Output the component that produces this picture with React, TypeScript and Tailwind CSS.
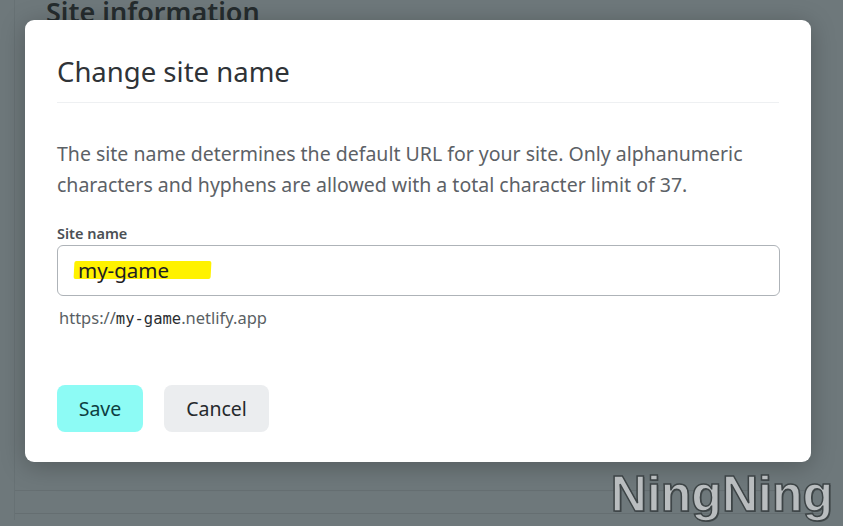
export default function App() {
  return (
    <div
      className="relative h-[526px] w-[843px] overflow-hidden bg-[#6e787b]"
      style={{ fontFamily: '"Noto Sans", "Open Sans", sans-serif' }}
    >
      {/* page behind the overlay, already dimmed */}
      <div className="ml-[14px] mr-[14px] h-full border-l border-[#677174]">
        <h2 className="ml-[31px] -mt-[6px] text-[27px] font-semibold leading-[36px] text-[#252c2e]">
          Site information
        </h2>
        <div className="mt-[460px] border-t border-[#666f72]" />
        <div className="mt-[22px] border-t border-[#656e71]" />
      </div>

      {/* dialog */}
      <div className="absolute inset-0 pl-[25px] pt-[20px]">
        <div className="w-[786px] h-[442px] rounded-[9px] bg-white px-[32px] pt-[34px] shadow-[0_4px_24px_rgba(0,0,0,0.25)]">
          <h1 className="border-b border-[#eef0f2] pb-[12px] text-[27.5px] leading-[36px] text-[#2f3337]">
            Change site name
          </h1>
          <p className="mt-[35px] text-[19.5px] leading-[31px] text-[#5c6166]">
            The site name determines the default URL for your site. Only alphanumeric characters and hyphens are
            allowed with a total character limit of 37.
          </p>
          <label className="mt-[23px] block text-[14.5px] font-semibold leading-[20px] text-[#4b5055]">
            Site name
          </label>
          <div className="mt-[2px] flex h-[51px] w-[723px] items-center rounded-[6px] border border-[#aeb3b8] pl-[20px]">
            <span className="relative text-[20.5px] text-[#1d2023]">
              <span className="absolute -left-[4px] top-[6px] h-[18px] w-[137px] -skew-x-3 rounded-[2px] bg-[#fff200]" />
              <span className="relative">my-game</span>
            </span>
          </div>
          <div className="mt-[11px] pl-[2px] text-[16.5px] leading-[22px] text-[#5a5f64]">
            https://<span style={{ fontFamily: '"DejaVu Sans Mono", monospace' }} className="text-[15.5px] text-[#2a2e32]">my-game</span>.netlify.app
          </div>
          <div className="mt-[55px] flex gap-[21px]">
            <button className="h-[47px] w-[86px] rounded-[8px] bg-[#8dfbf5] text-[19.5px] text-[#0d3f42]">Save</button>
            <button className="h-[47px] w-[105px] rounded-[8px] bg-[#ebedef] text-[19.5px] text-[#25292c]">Cancel</button>
          </div>
        </div>
      </div>

      {/* watermark */}
      <div
        className="absolute right-[10px] bottom-[7px] text-[50px] font-bold leading-[50px] text-[#b9bdbf]"
        style={{
          fontFamily: '"Liberation Sans Narrow", "Liberation Sans", sans-serif',
          WebkitTextStroke: '1.5px #3d4446',
          textShadow: '1px 1px 0 #4a5254',
        }}
      >
        NingNing
      </div>
    </div>
  );
}
